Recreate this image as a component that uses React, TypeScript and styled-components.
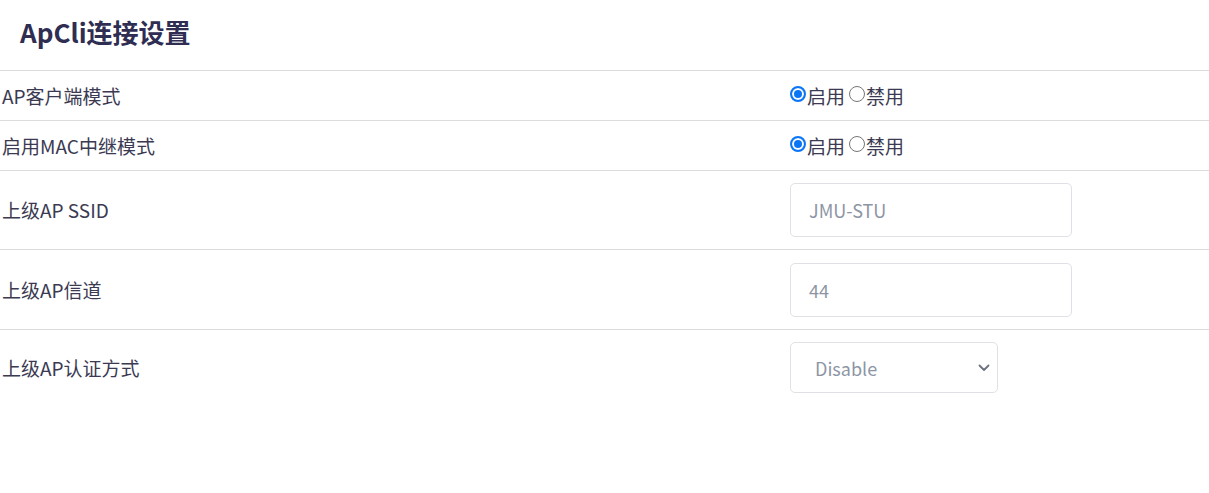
import React from "react";
import styled, { createGlobalStyle } from "styled-components";

const Global = createGlobalStyle`
  html, body { margin: 0; padding: 0; background: #fff; }
  body { font-family: "Noto Sans CJK SC", "Noto Sans", sans-serif; }
  * { box-sizing: border-box; }
`;

const Page = styled.div`
  width: 1209px;
`;

const Header = styled.div`
  height: 71px;
  padding: 0 0 8px 20px;
  display: flex;
  align-items: center;
  border-bottom: 1px solid #dcdcdc;
`;

const Title = styled.h2`
  margin: 0;
  font-size: 26px;
  font-weight: 700;
  color: #2f2d52;
`;

const Row = styled.div<{ $h: number; $last?: boolean }>`
  display: grid;
  grid-template-columns: 790px 1fr;
  align-items: center;
  height: ${(p) => p.$h}px;
  border-bottom: ${(p) => (p.$last ? "none" : "1px solid #dcdcdc")};
`;

const Label = styled.div`
  padding-left: 2px;
  font-size: 19px;
  color: #3b3a52;
  line-height: 1;
  margin-top: -1px;
`;

const RadioGroup = styled.div`
  display: flex;
  align-items: center;
  font-size: 19px;
  color: #3b3a52;
  margin-top: -1px;
`;

const RadioLabel = styled.label`
  display: inline-flex;
  align-items: center;
  margin-right: 4px;
  line-height: 1;
`;

const Radio = styled.input`
  appearance: none;
  -webkit-appearance: none;
  flex-shrink: 0;
  width: 16px;
  height: 16px;
  margin: 0 1px 0 0;
  border-radius: 50%;
  border: 1px solid #767676;
  background: #fff;
  position: relative;
  top: -1px;
  &:checked {
    border: 2px solid #0b76f5;
    box-shadow: inset 0 0 0 2px #fff, inset 0 0 0 8px #0b76f5;
  }
`;

const TextInput = styled.input`
  width: 282px;
  height: 54px;
  border: 1px solid #dfe1e6;
  border-radius: 5px;
  padding: 0 18px;
  font-family: inherit;
  font-size: 18px;
  color: #8b93a4;
  outline: none;
  &::placeholder { color: #8d95a5; }
`;

const SelectWrap = styled.div`
  position: relative;
  width: 208px;
  height: 51px;
  margin-top: -1px;
`;

const Select = styled.select`
  width: 100%;
  height: 100%;
  appearance: none;
  -webkit-appearance: none;
  border: 1px solid #dfe1e6;
  border-radius: 5px;
  background: #fff;
  padding: 0 24px;
  font-family: inherit;
  font-size: 18px;
  color: #8d95a5;
  outline: none;
`;

const Chevron = styled.svg`
  position: absolute;
  right: 8px;
  top: 50%;
  transform: translateY(-50%);
  pointer-events: none;
`;

type Choice = { name: string };

const EnableDisable = ({ name }: Choice) => (
  <RadioGroup>
    <RadioLabel>
      <Radio type="radio" name={name} defaultChecked />
      启用
    </RadioLabel>
    <RadioLabel>
      <Radio type="radio" name={name} />
      禁用
    </RadioLabel>
  </RadioGroup>
);

export default function App() {
  return (
    <Page>
      <Global />
      <Header>
        <Title>ApCli连接设置</Title>
      </Header>
      <Row $h={50}>
        <Label>AP客户端模式</Label>
        <EnableDisable name="apcli" />
      </Row>
      <Row $h={50}>
        <Label>启用MAC中继模式</Label>
        <EnableDisable name="mac" />
      </Row>
      <Row $h={79}>
        <Label>上级AP SSID</Label>
        <div>
          <TextInput placeholder="JMU-STU" />
        </div>
      </Row>
      <Row $h={80}>
        <Label>上级AP信道</Label>
        <div>
          <TextInput placeholder="44" />
        </div>
      </Row>
      <Row $h={76} $last>
        <Label>上级AP认证方式</Label>
        <SelectWrap>
          <Select defaultValue="Disable">
            <option>Disable</option>
          </Select>
          <Chevron width="12" height="8" viewBox="0 0 12 8">
            <path d="M1.5 1.5 L6 6 L10.5 1.5" fill="none" stroke="#6b7280" strokeWidth="1.8" strokeLinecap="round" strokeLinejoin="round" />
          </Chevron>
        </SelectWrap>
      </Row>
    </Page>
  );
}
